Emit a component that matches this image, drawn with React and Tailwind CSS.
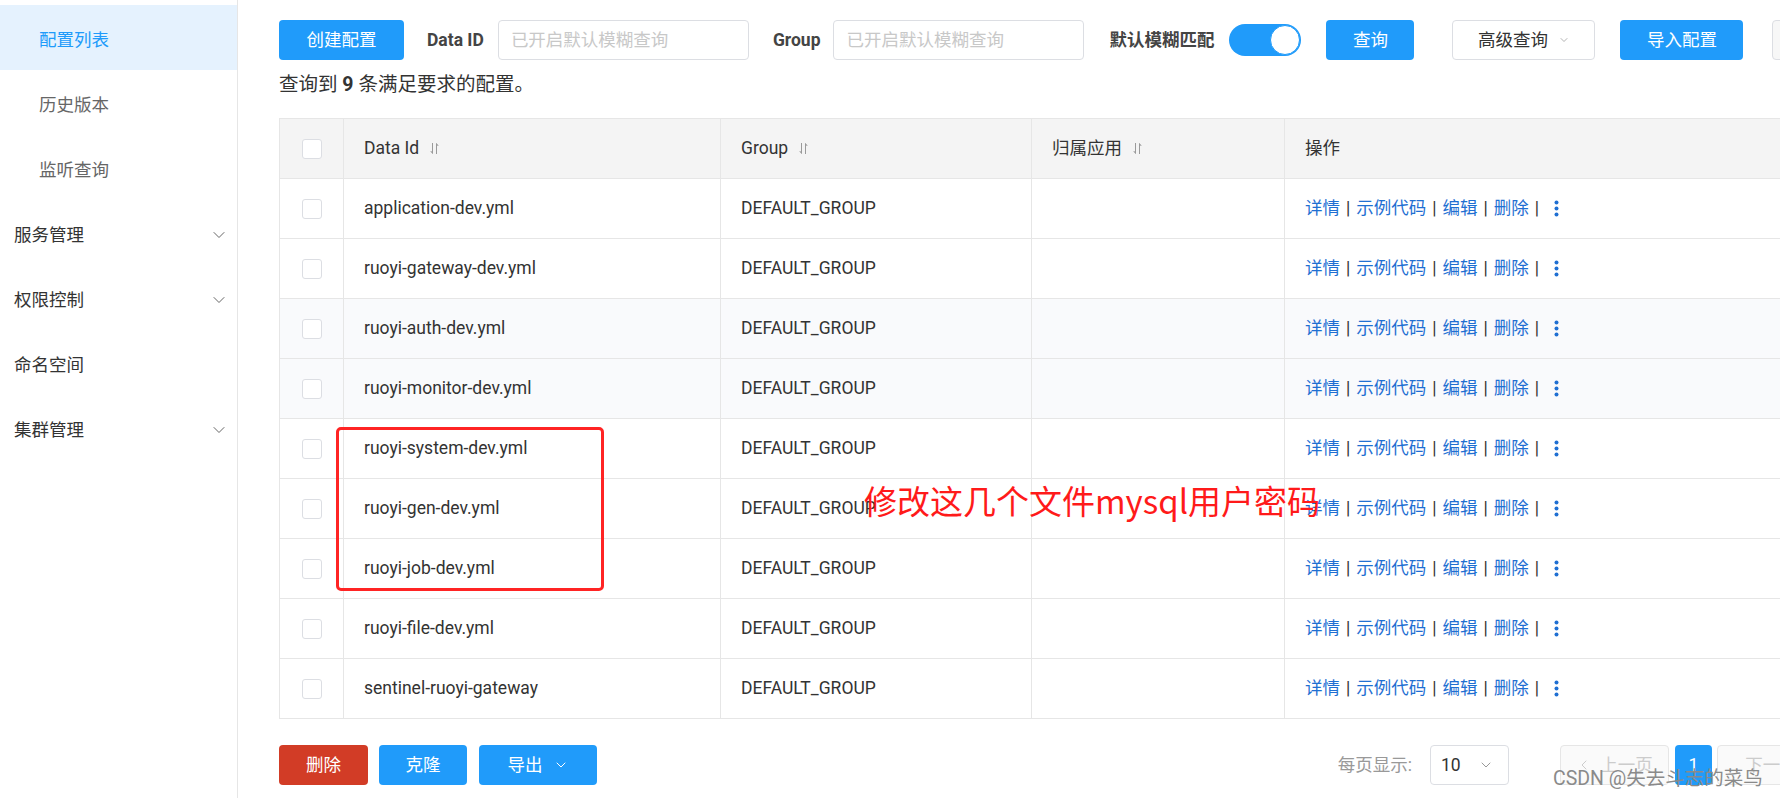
import React from 'react';
import { ChevronDown, ChevronLeft } from 'lucide-react';

const rows = [
  'application-dev.yml',
  'ruoyi-gateway-dev.yml',
  'ruoyi-auth-dev.yml',
  'ruoyi-monitor-dev.yml',
  'ruoyi-system-dev.yml',
  'ruoyi-gen-dev.yml',
  'ruoyi-job-dev.yml',
  'ruoyi-file-dev.yml',
  'sentinel-ruoyi-gateway',
];

// small up/down sort glyph next to the header text
const SortIcon = () => (
  <svg width="9" height="13" viewBox="0 0 9 13" className="ml-[11px] inline-block" fill="none" stroke="#9a9a9a" strokeWidth="1">
    <path d="M2.5 1v10.5M2.5 11.5L0.8 9" />
    <path d="M6.5 12V1.5M6.5 1.5L8.2 4" />
  </svg>
);

const Kebab = () => (
  <svg width="5" height="17" viewBox="0 0 5 17" className="inline-block ml-[9px]">
    <circle cx="2.5" cy="2.5" r="2" fill="#1f6fd2" />
    <circle cx="2.5" cy="8.5" r="2" fill="#1f6fd2" />
    <circle cx="2.5" cy="14.5" r="2" fill="#1f6fd2" />
  </svg>
);

const Sep = () => <span className="mx-[6px] text-[#333]">|</span>;

const SideItem = ({ label, active, sub, arrow }) => (
  <div
    className={`h-[65px] flex items-center justify-between pt-[5px] pr-[8px] ${sub ? 'pl-[39px]' : 'pl-[14px]'} ${
      active ? 'bg-[#e5f2fe] text-[#209bfa]' : sub ? 'text-[#666]' : 'text-[#333]'
    }`}
  >
    <span>{label}</span>
    {arrow && <ChevronDown size={20} strokeWidth={1.2} className="text-[#666]" />}
  </div>
);

export default function App() {
  return (
    <div className="w-[1780px] h-[798px] overflow-hidden bg-white flex relative font-['Roboto','Noto_Sans_CJK_SC',sans-serif] text-[17.5px] text-[#333]">
      {/* sidebar */}
      <aside className="w-[238px] shrink-0 border-r border-[#e6e6e6] pt-[5px]">
        <SideItem label="配置列表" active sub />
        <SideItem label="历史版本" sub />
        <SideItem label="监听查询" sub />
        <SideItem label="服务管理" arrow />
        <SideItem label="权限控制" arrow />
        <SideItem label="命名空间" />
        <SideItem label="集群管理" arrow />
      </aside>

      {/* main */}
      <main className="flex-1 min-w-0 pl-[41px] overflow-hidden">
        {/* toolbar */}
        <div className="mt-[20px] h-[40px] flex items-center whitespace-nowrap">
          <button className="w-[125px] h-[40px] shrink-0 rounded-[4px] bg-[#209bfa] text-white">创建配置</button>
          <span className="ml-[23px] font-bold text-[#444]">Data ID</span>
          <div className="ml-[14px] w-[251px] h-[40px] shrink-0 border border-[#dcdee3] rounded-[4px] flex items-center pl-[12px] text-[#c8c8c8]">
            已开启默认模糊查询
          </div>
          <span className="ml-[24px] font-bold text-[#444]">Group</span>
          <div className="ml-[13px] w-[251px] h-[40px] shrink-0 border border-[#dcdee3] rounded-[4px] flex items-center pl-[12px] text-[#c8c8c8]">
            已开启默认模糊查询
          </div>
          <span className="ml-[25px] font-bold text-[#444]">默认模糊匹配</span>
          <div className="ml-[15px] w-[72px] h-[32px] shrink-0 rounded-full bg-[#209bfa] flex items-center justify-end pr-[1px]">
            <div className="w-[30px] h-[30px] rounded-full bg-white border border-[#209bfa]" />
          </div>
          <button className="ml-[25px] w-[88px] h-[40px] shrink-0 rounded-[4px] bg-[#209bfa] text-white">查询</button>
          <button className="ml-[38px] w-[143px] h-[40px] shrink-0 rounded-[4px] border border-[#dcdee3] bg-white text-[#333] flex items-center justify-center">
            高级查询
            <ChevronDown size={12} strokeWidth={1.5} className="ml-[10px] text-[#999]" />
          </button>
          <button className="ml-[25px] w-[123px] h-[40px] shrink-0 rounded-[4px] bg-[#209bfa] text-white">导入配置</button>
          <div className="ml-[29px] w-[60px] h-[40px] shrink-0 rounded-[4px] border border-[#dcdee3] bg-[#f7f7f7]" />
        </div>

        {/* summary */}
        <div className="mt-[12px] h-[25px] leading-[25px] text-[19.5px] text-[#333]">
          查询到 <b className="font-bold">9</b> 条满足要求的配置。
        </div>

        {/* table */}
        <table className="mt-[21px] w-[1565px] table-fixed border-collapse">
          <colgroup>
            <col className="w-[64px]" />
            <col className="w-[377px]" />
            <col className="w-[311px]" />
            <col className="w-[253px]" />
            <col />
          </colgroup>
          <thead>
            <tr className="h-[60px] bg-[#f4f4f4] text-left">
              <th className="border border-[#e6e6e6] font-normal">
                <div className="flex justify-center">
                  <div className="w-[20px] h-[20px] bg-white border border-[#dcdee3] rounded-[3px]" />
                </div>
              </th>
              <th className="border border-[#e6e6e6] font-normal pl-[20px]">
                <span className="flex items-center">Data Id<SortIcon /></span>
              </th>
              <th className="border border-[#e6e6e6] font-normal pl-[20px]">
                <span className="flex items-center">Group<SortIcon /></span>
              </th>
              <th className="border border-[#e6e6e6] font-normal pl-[20px]">
                <span className="flex items-center">归属应用<SortIcon /></span>
              </th>
              <th className="border border-[#e6e6e6] font-normal pl-[20px]">操作</th>
            </tr>
          </thead>
          <tbody>
            {rows.map((name, i) => (
              <tr key={name} className={`h-[60px] ${i === 2 || i === 3 ? 'bg-[#f9fafc]' : 'bg-white'}`}>
                <td className="border border-[#e6e6e6]">
                  <div className="flex justify-center">
                    <div className="w-[20px] h-[20px] bg-white border border-[#dcdee3] rounded-[3px]" />
                  </div>
                </td>
                <td className="border border-[#e6e6e6] pl-[20px]">{name}</td>
                <td className="border border-[#e6e6e6] pl-[20px]">DEFAULT_GROUP</td>
                <td className="border border-[#e6e6e6]" />
                <td className="border border-[#e6e6e6] pl-[20px] whitespace-nowrap">
                  <span className="inline-flex items-center text-[#1f6fd2]">
                    详情<Sep />示例代码<Sep />编辑<Sep />删除<Sep />
                    <Kebab />
                  </span>
                </td>
              </tr>
            ))}
          </tbody>
        </table>

        {/* bottom bar */}
        <div className="mt-[26px] w-[1565px] h-[40px] flex items-center justify-between whitespace-nowrap">
          <div className="flex items-center">
            <button className="w-[89px] h-[40px] rounded-[4px] bg-[#d23c26] text-white">删除</button>
            <button className="ml-[11px] w-[88px] h-[40px] rounded-[4px] bg-[#209bfa] text-white">克隆</button>
            <button className="ml-[12px] w-[118px] h-[40px] rounded-[4px] bg-[#209bfa] text-white flex items-center justify-center">
              导出
              <ChevronDown size={16} strokeWidth={1.5} className="ml-[10px]" />
            </button>
          </div>
          <div className="flex items-center pr-[18px]">
            <span className="text-[#999]">每页显示:</span>
            <div className="ml-[18px] w-[79px] h-[40px] border border-[#dcdee3] rounded-[4px] flex items-center justify-between pl-[10px] pr-[14px]">
              <span>10</span>
              <ChevronDown size={16} strokeWidth={1.5} className="text-[#999]" />
            </div>
            <div className="ml-[51px] w-[109px] h-[40px] border border-[#e6e6e6] bg-[#fafafa] rounded-[4px] flex items-center justify-center text-[#ccc]">
              <ChevronLeft size={16} strokeWidth={1.5} className="mr-[8px]" />上一页
            </div>
            <div className="ml-[6px] w-[37px] h-[40px] rounded-[4px] bg-[#209bfa] text-white flex items-center justify-center">1</div>
            <div className="ml-[5px] w-[109px] h-[40px] border border-[#e6e6e6] bg-[#fafafa] rounded-[4px] flex items-center justify-center text-[#ccc]">
              下一页
            </div>
          </div>
        </div>
      </main>

      {/* annotation overlay */}
      <div className="absolute left-[336px] top-[427px] w-[268px] h-[164px] border-[3px] border-[#ff2424] rounded-[5px]" />
      <div className="absolute left-[864px] top-[478px] text-[33px] leading-[44px] text-[#ff1a1a] whitespace-nowrap font-['Noto_Sans_CJK_SC',sans-serif]">
        修改这几个文件mysql用户密码
      </div>

      {/* watermark */}
      <div className="absolute left-[1553px] top-[766px] text-[19.5px] leading-[26px] text-[#8a8a8a] whitespace-nowrap">
        CSDN @失去斗志的菜鸟
      </div>
    </div>
  );
}
